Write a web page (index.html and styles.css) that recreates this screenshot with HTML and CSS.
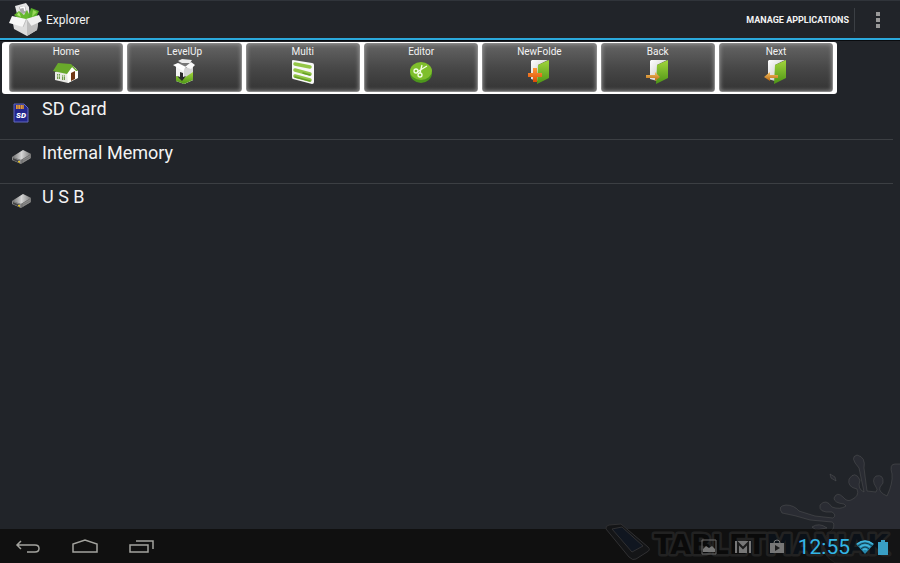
FILE: index.html
```html
<!DOCTYPE html>
<html lang="en">
<head>
<meta charset="utf-8">
<title>Explorer</title>
<link rel="stylesheet" href="styles.css">
</head>
<body>
<svg class="defs" aria-hidden="true">
  <defs>
    <linearGradient id="green" x1="0" y1="0" x2="0" y2="1"><stop offset="0" stop-color="#a3d63c"/><stop offset="1" stop-color="#4c9416"/></linearGradient>
    <linearGradient id="white" x1="0" y1="0" x2="1" y2="1"><stop offset="0" stop-color="#fff"/><stop offset="1" stop-color="#bcbcbc"/></linearGradient>
    <linearGradient id="metal" x1="0" y1="0" x2="1" y2="0"><stop offset="0" stop-color="#6c6c6c"/><stop offset=".5" stop-color="#d5d5d5"/><stop offset="1" stop-color="#777"/></linearGradient>
    <linearGradient id="orange" x1="0" y1="0" x2="0" y2="1"><stop offset="0" stop-color="#ff9b3c"/><stop offset="1" stop-color="#dc4b05"/></linearGradient>
    <linearGradient id="gold" x1="0" y1="0" x2="0" y2="1"><stop offset="0" stop-color="#f6c365"/><stop offset="1" stop-color="#b8660d"/></linearGradient>
  </defs>
  <symbol id="folder" viewBox="0 0 26 26">
    <path d="M5 2 6 1H22L12 6V22L5 20Z" fill="url(#white)"/>
    <path d="M12 6 23 1V19L11 25Z" fill="url(#green)"/>
  </symbol>
  <symbol id="drive" viewBox="0 0 20 16">
    <path d="M0 8 11 1 19 5V9L9 15 0 11Z" fill="#555"/>
    <path d="M0 8 11 1 19 5 9 11Z" fill="url(#metal)"/>
    <path d="M0 8 9 11V15L0 11Z" fill="#8a8a8a"/>
    <path d="M1 9 8 12V14L1 11Z" fill="#444"/>
    <path d="M9 11 19 5V9L9 15Z" fill="#777"/>
    <path d="M11 11 18 7M11 13 18 9" stroke="#999" stroke-width=".6"/>
    <path d="M6 12 8 12V14L6 13Z" fill="#e6c42b"/>
  </symbol>
</svg>

<header class="bar">
  <svg class="logo" viewBox="0 0 34 34" aria-hidden="true">
    <path d="M6 3 17 0 20 4 21 17 9 15Z" fill="#e4e4e4"/>
    <path d="M10 4 16 3 18 10 12 11Z" fill="#aaa"/>
    <path d="M11 5 15 4 16 8" fill="none" stroke="#fff" stroke-width="1.500"/>
    <path d="M5 12 10 8 15 12 18 7 22 15 13 18Z" fill="#67b82e"/>
    <path d="M8 12 10 9 12 14" fill="#b4ea78"/>
    <path d="M22 5 30 8 25 18 19 15Z" fill="#58b02a"/>
    <path d="M24 7 28 9 23 14Z" fill="#99d75b"/>
    <path d="M3 15 18 17 30 14 28 27 18 33 5 26Z" fill="#ddd"/>
    <path d="M18 17 30 14 28 27 18 33Z" fill="#bdbdbd"/>
    <path d="M3 13 17 16 14 24 0 20Z" fill="#f7f7f7"/>
    <path d="M17 16 30 12 33 18 22 23Z" fill="#efefef"/>
    <path d="M17 17 14 24M18 17 22 23" stroke="#aaa" stroke-width=".6"/>
  </svg>
  <h1 class="title">Explorer</h1>
  <button class="manage" type="button">MANAGE APPLICATIONS</button>
  <button class="more" type="button" aria-label="More options"><i></i><i></i><i></i></button>
</header>

<main class="content">
  <nav class="tools" aria-label="File tools">
    <button class="tool" type="button">Home
      <svg viewBox="0 0 26 26" aria-hidden="true">
        <path d="M2 13 16 8 23 9 24 19 15 24 2 21Z" fill="#e9e9e5"/>
        <path d="M14 14 20 7 25 12V19L15 24Z" fill="#fffffa"/>
        <path d="M5 4 18 5 25 12 23 12 19 8 14 15 0 12Z" fill="#69a92b"/>
        <path d="M18 14 22 12V20L18 22Z" fill="#703713"/>
        <path d="M4 15H7V20H4ZM9 16H12V21H9Z" fill="#719a4c"/>
        <path d="M4 17H12M5.500 15V20M10.500 16V21" stroke="#e9f4dc" stroke-width=".7"/>
      </svg>
    </button>
    <button class="tool" type="button">LevelUp
      <svg viewBox="0 0 26 26" aria-hidden="true">
        <path d="M5 7 13 10 22 6V21L13 25 5 22Z" fill="#f4f4f4"/>
        <path d="M13 10 22 6V21L13 25Z" fill="#d4d4d4"/>
        <path d="M5 17 13 19 22 13V21L13 25 5 22Z" fill="url(#green)"/>
        <path d="M5 5 12 2 21 5 14 9Z" fill="#777"/>
        <path d="M7 2 11 0 21 1 19 4 11 4Z" fill="#ececec"/>
        <path d="M2 6 7 4 15 8 12 12Z" fill="#fff"/>
        <path d="M14 8 20 3 24 6 20 10Z" fill="#fafafa"/>
        <path d="M9 13 12 14V18L15 17 11 22 6 17 9 18Z" fill="#292929"/>
      </svg>
    </button>
    <button class="tool" type="button">Multi
      <svg viewBox="0 0 26 26" aria-hidden="true">
        <path d="M3 1 22 4Q24 4 24 6V23Q24 25 22 25L3 20Q2 20 2 18V2Q2 1 3 1Z" fill="#f8f8f8"/>
        <path d="M5 5 20 8M5 11 20 15M5 17 20 21" stroke="#94c647" stroke-width="3.500" stroke-linecap="round"/>
        <path d="M13 14 20 16M5 18 20 22" stroke="#659f28" stroke-width="1.500" stroke-linecap="round"/>
      </svg>
    </button>
    <button class="tool" type="button">Editor
      <svg viewBox="0 0 26 26" aria-hidden="true">
        <ellipse cx="13" cy="14" rx="11" ry="10" fill="#4c961c"/>
        <ellipse cx="13" cy="12" rx="11" ry="9" fill="#7fbf2c"/>
        <g fill="none" stroke="#f5ffe8" stroke-width="1.300"><circle cx="8" cy="12" r="2"/><circle cx="12" cy="16" r="2"/><path d="M9 13 19 7M12 14 14 6"/></g>
      </svg>
    </button>
    <button class="tool" type="button">NewFolde
      <svg viewBox="0 0 26 26" aria-hidden="true">
        <use href="#folder"/>
        <path d="M7 9H11V14H16V18H11V23H7V18H2V14H7Z" fill="url(#orange)"/>
      </svg>
    </button>
    <button class="tool" type="button">Back
      <svg viewBox="0 0 26 26" aria-hidden="true">
        <use href="#folder"/>
        <path d="M1 16H10V13L15 18 10 22V19H1Z" fill="url(#gold)"/>
      </svg>
    </button>
    <button class="tool" type="button">Next
      <svg viewBox="0 0 26 26" aria-hidden="true">
        <use href="#folder"/>
        <path d="M15 16H7V13L1 18 7 22V19H15Z" fill="url(#gold)"/>
      </svg>
    </button>
  </nav>

  <ul class="list">
    <li><a class="row" href="#sd">
      <svg viewBox="0 0 20 20" aria-hidden="true">
        <path d="M2 1H12L16 5V19H2Z" fill="#23268c" stroke="#6269bd"/>
        <path d="M4 2H12V6H4Z" fill="#e09a3a"/>
        <path d="M6 2V6M8.500 2V6M11 2V6" stroke="#6b4a50" stroke-width=".7"/>
        <text class="sd" x="9" y="15" text-anchor="middle">SD</text>
      </svg>SD Card</a></li>
    <li><a class="row" href="#internal"><svg viewBox="0 0 20 16" aria-hidden="true"><use href="#drive"/></svg>Internal Memory</a></li>
    <li><a class="row" href="#usb"><svg viewBox="0 0 20 16" aria-hidden="true"><use href="#drive"/></svg>U S B</a></li>
  </ul>
</main>

<footer class="system">
  <button class="key" type="button" aria-label="Back"><svg viewBox="0 0 28 16"><path d="M7 2 3 6 7 10M3 6H21Q25 6 25 9.500T21 13H13"/></svg></button>
  <button class="key" type="button" aria-label="Home"><svg viewBox="0 0 28 16"><path d="M2 13V5L14 1 26 5V13Z"/></svg></button>
  <button class="key" type="button" aria-label="Recent apps"><svg viewBox="0 0 28 16"><path d="M2 6H20V13H2ZM8 2H25V10"/></svg></button>
  <div class="status">
    <svg class="notice" viewBox="0 0 16 16" aria-hidden="true"><path d="M1 1H15V15H1Z" fill="none" stroke="#6a6a6a"/><path d="M2 10 5 7 8 9 11 7 14 10V13H2Z" fill="#777"/></svg>
    <svg class="notice" viewBox="0 0 16 16" aria-hidden="true"><path d="M0 2H16V14H0Z" fill="#777"/><path d="M3 14V4L8 9 13 4V14" fill="none" stroke="#1c1c1c" stroke-width="2"/></svg>
    <svg class="notice" viewBox="0 0 16 16" aria-hidden="true"><path d="M1 4H15V14H1Z" fill="#777"/><path d="M5 4Q5 1 8 1T11 4" fill="none" stroke="#777"/><path d="M6 6 11 9 6 12Z" fill="#1c1c1c"/></svg>
    <time class="clock">12:55</time>
    <svg class="wifi" viewBox="0 0 18 16" aria-hidden="true"><path d="M0 5Q9-2 18 5L9 15Z" fill="#2787aa"/><path d="M1 5Q9-1 17 5M4 8Q9 4 14 8M7 11Q9 9 11 11" fill="none" stroke="#42b8df" stroke-width="1.500"/><path d="M2 7Q9 1 16 7M5 10Q9 6 13 10" fill="none" stroke="#153a49"/></svg>
    <svg class="battery" viewBox="0 0 10 16" aria-hidden="true"><path d="M3 1H7V3H10V16H0V3H3Z" fill="#399fc5"/></svg>
  </div>
</footer>

<svg class="watermark" viewBox="0 0 300 123" aria-hidden="true">
  <path class="splash" d="M235 123Q218 112 223 99Q229 93 233 89Q235 83 232 82L210 80Q194 75 182 73Q177 66 186 65Q194 65 199 71L215 76 233 78Q237 75 232 72Q218 73 220 65Q226 58 232 67Q240 70 246 66L244 64Q234 63 234 58Q237 51 243 57Q247 62 251 60Q260 56 257 49Q247 47 249 39Q255 30 260 40Q257 49 264 52L259 28Q249 17 257 15Q266 17 264 28L267 51 276 52Q278 49 276 47Q271 40 276 36Q284 34 283 43L280 47Q278 52 287 56Q293 43 292 34Q289 24 295 24H302V125Z"/>
  <path class="splash" d="M230 34 235 37 236 41 231 38ZM212 87Q219 82 227 88L216 90Z"/>
  <path class="floor" d="M200 89H300V123H200Z"/>
  <g class="phone"><path d="M6 89Q5 86 9 85L21 84 48 107Q51 110 47 112L36 119Q33 121 29 117Z"/><path class="screen" d="M12 89 22 87 43 106 32 112Z"/></g>
  <text class="brand" x="54" y="114">TABLET<tspan class="maniak">MANIAK</tspan></text>
</svg>
</body>
</html>
```
FILE: styles.css
```css
* { box-sizing: border-box; }

body {
  display: flex;
  flex-direction: column;
  min-height: 100vh;
  margin: 0;
  background: #212429;
  color: #f3f3f3;
  font-family: Roboto, "Liberation Sans", sans-serif;
}

button {
  padding: 0;
  border: 0;
  background: none;
  color: inherit;
  font: inherit;
}

svg { flex: none; }

.defs {
  position: absolute;
  width: 0;
  height: 0;
}

.bar {
  display: flex;
  align-items: center;
  height: 41px;
  padding-left: 9px;
  border-bottom: 1px solid #090b0e;
  box-shadow: inset 0 -2px #2ba9dc, inset 0 1px #30343a;
}

.logo {
  width: 34px;
  height: 34px;
}

.title {
  margin: 0 auto 0 3px;
  font-size: 12px;
  font-weight: 400;
}

.manage {
  height: 24px;
  padding-right: 5px;
  border-right: 1px solid #3b3f44;
  font-size: 9px;
  font-weight: 700;
}

.more {
  display: flex;
  flex-direction: column;
  align-items: center;
  gap: 2px;
  width: 45px;
}

.more i {
  width: 4px;
  height: 4px;
  background: #999;
}

.content { flex: 1; }

.tools {
  display: grid;
  grid-template-columns: repeat(7, 1fr);
  gap: 4px;
  width: 92.8%;
  margin: 1px 0 2px 2px;
  padding: 1px 4px 2px 7px;
  border-radius: 3px;
  background: #fff;
}

.tool {
  display: flex;
  flex-direction: column;
  align-items: center;
  height: 49px;
  padding-top: 1px;
  border: 1px solid #888;
  border-radius: 3px;
  background: linear-gradient(#646464, #484848 50%, #343434);
  box-shadow: inset 0 0 4px #999;
  font-size: 10px;
  line-height: 13px;
}

.tool svg {
  width: 26px;
  height: 26px;
  margin-top: 1px;
}

.list {
  margin: 0 7px 0 0;
  padding: 0;
  list-style: none;
}

.list li + li { border-top: 1px solid #3c3f43; }

.row {
  display: flex;
  gap: 10px;
  height: 43px;
  padding-left: 12px;
  color: inherit;
  font-size: 18px;
  line-height: 26px;
  text-decoration: none;
}

.row svg {
  width: 20px;
  height: 20px;
  margin-top: 7px;
}

.sd {
  fill: #fff;
  font-size: 8px;
  font-style: italic;
  font-weight: 900;
}

.system {
  display: flex;
  align-items: center;
  height: 34px;
  padding: 2px 12px 0 14px;
  background: #101010;
}

.key {
  display: flex;
  margin-right: 29px;
}

.key svg {
  width: 28px;
  height: 16px;
  fill: none;
  stroke: #a3a39e;
  stroke-width: 1.5;
}

.status {
  position: relative;
  z-index: 1;
  display: flex;
  align-items: center;
  margin-left: auto;
}

.notice {
  width: 16px;
  height: 16px;
  margin-right: 18px;
}

.clock {
  margin-left: -5px;
  margin-right: 6px;
  color: #33b5e5;
  font-size: 21px;
  line-height: 32px;
}

.wifi {
  width: 18px;
  height: 16px;
  margin-right: 4px;
}

.battery {
  width: 10px;
  height: 16px;
}

.watermark {
  position: absolute;
  right: 0;
  bottom: 0;
  width: 300px;
  height: 123px;
  pointer-events: none;
}

.splash {
  fill: #6c6c78;
  fill-opacity: .12;
  stroke: #686868;
  stroke-opacity: .35;
}

.floor {
  fill: #101010;
  fill-opacity: .6;
}

.phone {
  fill: #141517;
  stroke: #303032;
}

.screen { fill: #101620; }

.brand {
  fill: #0a0a0a;
  stroke: #222;
  stroke-width: 5;
  stroke-linejoin: round;
  paint-order: stroke;
  font-family: "DejaVu Sans", sans-serif;
  font-size: 27px;
  font-weight: 700;
}

.maniak { fill: #0b1118; }
```
